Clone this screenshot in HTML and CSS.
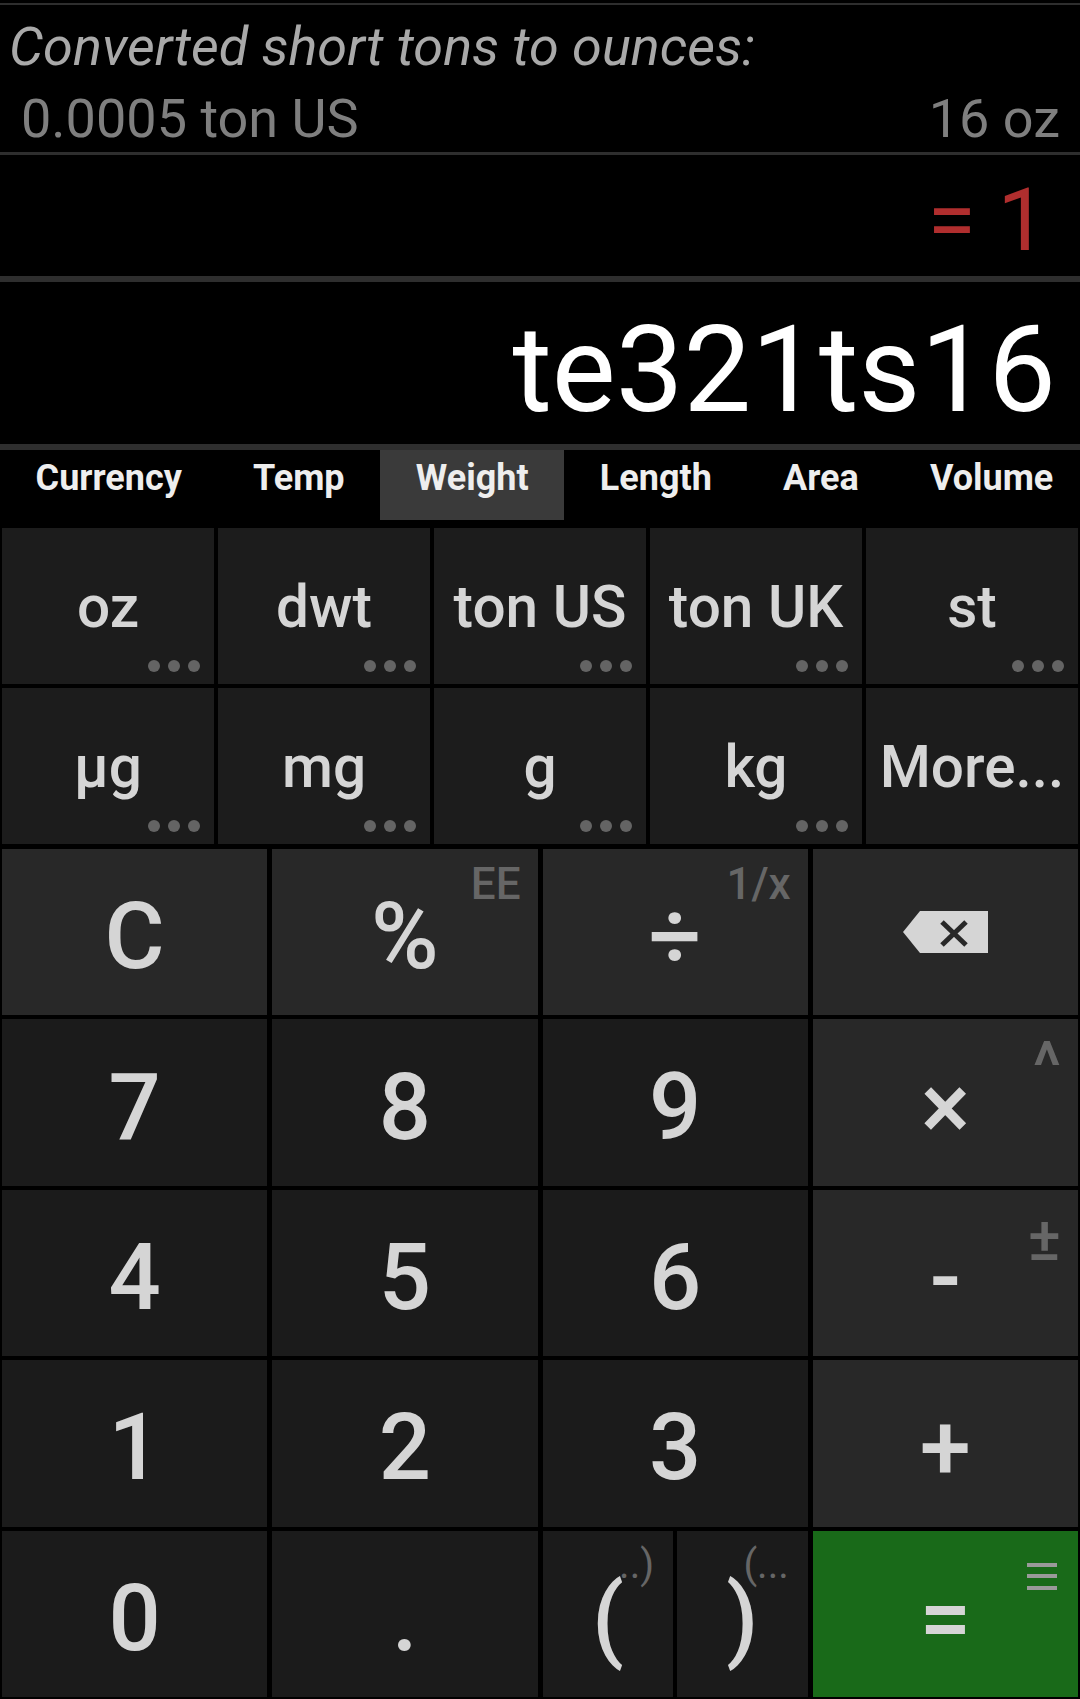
FILE: index.html
```html
<!DOCTYPE html>
<html lang="en">
<head>
<meta charset="utf-8">
<title>Calculator</title>
<link rel="stylesheet" href="styles.css">
</head>
<body>
<div class="app">
  <section class="history">
    <div class="hist-title">Converted short tons to ounces:</div>
    <div class="hist-row"><span>0.0005 ton US</span><span>16 oz</span></div>
  </section>
  <section class="result"><span>= 1</span></section>
  <section class="display">te321ts16</section>
  <nav class="tabs">
    <div class="tab">Currency</div>
    <div class="tab">Temp</div>
    <div class="tab active">Weight</div>
    <div class="tab">Length</div>
    <div class="tab">Area</div>
    <div class="tab">Volume</div>
  </nav>
  <div class="units">
    <div class="unit">oz<span class="dots"><i></i><i></i><i></i></span></div>
    <div class="unit">dwt<span class="dots"><i></i><i></i><i></i></span></div>
    <div class="unit">ton US<span class="dots"><i></i><i></i><i></i></span></div>
    <div class="unit">ton UK<span class="dots"><i></i><i></i><i></i></span></div>
    <div class="unit">st<span class="dots"><i></i><i></i><i></i></span></div>
    <div class="unit">µg<span class="dots"><i></i><i></i><i></i></span></div>
    <div class="unit">mg<span class="dots"><i></i><i></i><i></i></span></div>
    <div class="unit">g<span class="dots"><i></i><i></i><i></i></span></div>
    <div class="unit">kg<span class="dots"><i></i><i></i><i></i></span></div>
    <div class="unit">More...</div>
  </div>
  <div class="keys">
    <div class="key fn">C</div>
    <div class="key fn">%<span class="sup">EE</span></div>
    <div class="key fn">÷<span class="sup">1/x</span></div>
    <div class="key fn icon-key">
      <svg class="bksp" width="85" height="42" viewBox="0 0 85 42">
        <polygon points="0,21 17,0 85,0 85,42 17,42" fill="#d5d5d5"/>
        <line x1="39" y1="11" x2="63" y2="34" stroke="#282828" stroke-width="5"/>
        <line x1="63" y1="11" x2="39" y2="34" stroke="#282828" stroke-width="5"/>
      </svg>
    </div>
    <div class="key">7</div>
    <div class="key">8</div>
    <div class="key">9</div>
    <div class="key fn">×<span class="sup caret">^</span></div>
    <div class="key">4</div>
    <div class="key">5</div>
    <div class="key">6</div>
    <div class="key fn">-<span class="sup pm">±</span></div>
    <div class="key">1</div>
    <div class="key">2</div>
    <div class="key">3</div>
    <div class="key fn">+</div>
    <div class="key">0</div>
    <div class="key">.</div>
    <div class="parens">
      <div class="key"><span class="sup small">..)</span><span class="main">(</span></div>
      <div class="key"><span class="sup small">(...</span><span class="main">)</span></div>
    </div>
    <div class="key eq">=
      <svg class="menu" width="30" height="27" viewBox="0 0 30 27">
        <rect x="0" y="0" width="30" height="4" fill="#9a9a9a"/>
        <rect x="0" y="11" width="30" height="4" fill="#9a9a9a"/>
        <rect x="0" y="23" width="30" height="4" fill="#9a9a9a"/>
      </svg>
    </div>
  </div>
</div>
</body>
</html>
```

FILE: styles.css
```css
* {
  box-sizing: border-box;
  margin: 0;
  padding: 0;
}

html, body {
  background: #000;
}

body {
  margin: 0;
  width: 1080px;
  height: 1699px;
  overflow: hidden;
  font-family: Roboto, "Liberation Sans", sans-serif;
}

.app {
  padding-top: 3px;
}

.history {
  height: 152px;
  padding-top: 6px;
  border-top: 2px solid #2e2e2e;
  border-bottom: 3px solid #2e2e2e;
}

.hist-title {
  font-size: 54px;
  line-height: 72px;
  font-style: italic;
  color: #a9a9a9;
  padding-left: 9px;
  white-space: nowrap;
}

.hist-row {
  display: flex;
  justify-content: space-between;
  font-size: 54px;
  line-height: 72px;
  color: #7f7f7f;
  padding: 0 20px 0 21px;
}

.result {
  height: 127px;
  padding: 8px 33px 0 0;
  border-bottom: 6px solid #2e2e2e;
  font-size: 88px;
  line-height: 113px;
  color: #b02e2e;
  text-align: right;
}

.display {
  height: 168px;
  padding: 14px 24px 0 0;
  border-bottom: 6px solid #2e2e2e;
  font-size: 120.5px;
  line-height: 148px;
  color: #fff;
  text-align: right;
  overflow: hidden;
}

.tabs {
  display: flex;
  height: 70px;
  margin-bottom: 8px;
  overflow: hidden;
  white-space: nowrap;
}

.tab {
  flex: none;
  height: 70px;
  padding: 0 35.6px;
  font-size: 36px;
  line-height: 56px;
  font-weight: 700;
  color: #eeeeee;
}

.tab.active {
  background: #3a3a3a;
}

.units {
  display: grid;
  grid-template-columns: repeat(5, 1fr);
  grid-template-rows: 156px 156px;
  gap: 4px;
  padding: 0 2px;
}

.unit {
  position: relative;
  display: flex;
  align-items: center;
  justify-content: center;
  padding-top: 2px;
  background: #1c1c1c;
  font-size: 58.5px;
  font-weight: 500;
  color: #d5d5d5;
  white-space: nowrap;
}

.dots {
  position: absolute;
  right: 14px;
  bottom: 12px;
  display: flex;
  gap: 8px;
}

.dots i {
  display: block;
  width: 12px;
  height: 12px;
  border-radius: 50%;
  background: #646464;
}

.keys {
  display: grid;
  grid-template-columns: repeat(4, 1fr);
  grid-template-rows: repeat(5, 1fr);
  gap: 4px 5px;
  height: 848px;
  margin-top: 5px;
  padding: 0 2px;
}

.key {
  position: relative;
  display: flex;
  align-items: center;
  justify-content: center;
  padding-top: 9px;
  background: #1b1b1b;
  font-size: 92px;
  font-weight: 500;
  color: #d5d5d5;
}

.key.fn {
  background: #282828;
}

.key.icon-key {
  padding-top: 0;
}

.key.eq {
  background: #196a19;
}

.parens {
  display: grid;
  grid-template-columns: 1fr 1fr;
  gap: 4px;
}

.main {
  position: relative;
}

.sup {
  position: absolute;
  top: 13px;
  right: 17px;
  font-size: 44px;
  line-height: 1;
  font-weight: 500;
  color: #666;
}

.sup.caret {
  top: 15px;
  font-size: 66px;
}

.sup.pm {
  top: 18px;
  font-size: 62px;
}

.sup.small {
  top: 14px;
  right: 19px;
  font-size: 40px;
  font-weight: 400;
}

.menu {
  position: absolute;
  top: 32px;
  right: 21px;
}
```
